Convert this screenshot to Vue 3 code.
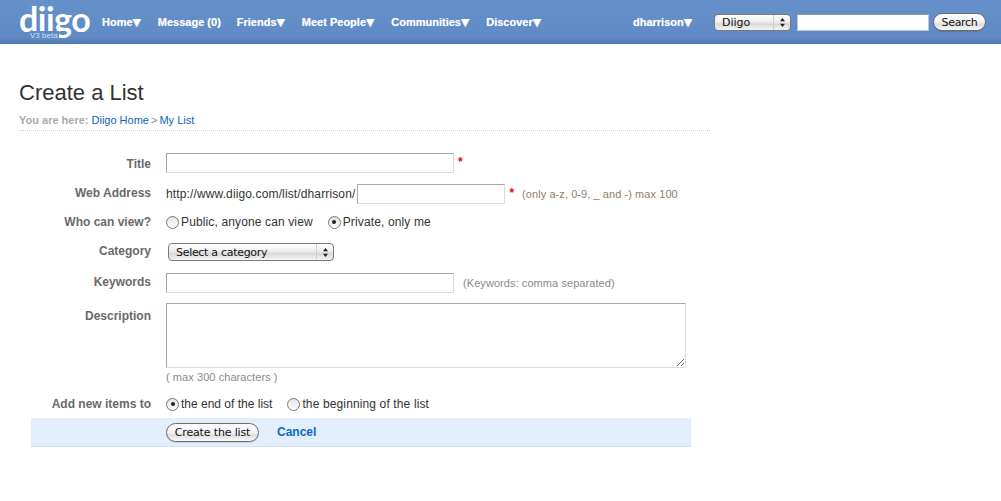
<script setup>
const nav = [
  { label: 'Home', arrow: true },
  { label: 'Message (0)', arrow: false },
  { label: 'Friends', arrow: true },
  { label: 'Meet People', arrow: true },
  { label: 'Communities', arrow: true },
  { label: 'Discover', arrow: true }
]
</script>

<template>
  <div class="page">
    <header class="top">
      <div class="logo">
        <span class="logo-word">diigo</span>
        <span class="logo-sub">V3 beta</span>
      </div>
      <nav class="nav">
        <a v-for="n in nav" :key="n.label" class="nav-item">{{ n.label }}<span v-if="n.arrow" class="arrow">▼</span></a>
      </nav>
      <div class="right">
        <a class="nav-item user">dharrison<span class="arrow">▼</span></a>
        <div class="select select-top">
          <span class="select-label">Diigo</span>
          <span class="stepper">
            <svg width="7" height="11" viewBox="0 0 7 11"><path d="M3.5 1 6 4.2H1zM3.5 10 1 6.8h5z" fill="#222"/></svg>
          </span>
        </div>
        <input class="search-input" type="text" />
        <button class="btn btn-search" type="button">Search</button>
      </div>
    </header>

    <main class="content">
      <h1 class="title">Create a List</h1>
      <div class="crumbs">
        <span class="here">You are here:</span>
        <a class="link">Diigo Home</a>
        <span class="here sep">&gt;</span>
        <a class="link">My List</a>
      </div>

      <form class="form">
        <div class="row row-title">
          <label class="label label-title">Title</label>
          <input class="field wide" type="text" />
          <span class="req">*</span>
        </div>
        <div class="row row-web">
          <label class="label">Web Address</label>
          <span class="text url">http://www.diigo.com/list/dharrison/</span>
          <input class="field short" type="text" />
          <span class="req req-web">*</span>
          <span class="hint hint-web">(only a-z, 0-9, _ and -) max 100</span>
        </div>
        <div class="row row-who">
          <label class="label">Who can view?</label>
          <span class="radio"></span>
          <span class="text opt">Public, anyone can view</span>
          <span class="radio on"></span>
          <span class="text">Private, only me</span>
        </div>
        <div class="row row-cat">
          <label class="label">Category</label>
          <div class="select select-cat">
            <span class="select-label">Select a category</span>
            <span class="stepper">
              <svg width="7" height="11" viewBox="0 0 7 11"><path d="M3.5 1 6 4.2H1zM3.5 10 1 6.8h5z" fill="#222"/></svg>
            </span>
          </div>
        </div>
        <div class="row row-key">
          <label class="label">Keywords</label>
          <input class="field wide" type="text" />
          <span class="hint hint-key">(Keywords: comma separated)</span>
        </div>
        <div class="row row-desc">
          <label class="label">Description</label>
          <textarea class="area"></textarea>
        </div>
        <div class="row row-max">
          <span class="label"></span>
          <span class="hint max">( max 300 characters )</span>
        </div>
        <div class="row row-add">
          <label class="label">Add new items to</label>
          <span class="radio on"></span>
          <span class="text opt opt-end">the end of the list</span>
          <span class="radio"></span>
          <span class="text">the beginning of the list</span>
        </div>
        <div class="actions">
          <button class="btn btn-create" type="button">Create the list</button>
          <a class="cancel">Cancel</a>
        </div>
      </form>
    </main>
  </div>
</template>

<style scoped>
.page {
  width: 1001px;
  height: 501px;
  overflow: hidden;
  background: #fff;
  font-family: "Liberation Sans", Arial, sans-serif;
  color: #333;
}

.top {
  height: 44px;
  box-sizing: border-box;
  display: flex;
  align-items: center;
  padding-left: 20px;
  background: linear-gradient(to bottom, #6590c9 0, #5f8ac5 38px, #5680b9 41px, #4f78b0 44px);
}
.logo {
  width: 82px;
  height: 44px;
  position: relative;
  color: #fff;
  flex: none;
}
.logo-word {
  position: absolute;
  left: -1px;
  top: 0;
  font-family: Lato, sans-serif;
  font-weight: 700;
  font-size: 34px;
  line-height: 38px;
  letter-spacing: -0.5px;
}
.logo-sub {
  position: absolute;
  left: 10px;
  top: 31px;
  padding-right: 1px;
  font-size: 8px;
  line-height: 9px;
  color: #d5e1f1;
  background: #5f8ac5;
}
.nav {
  display: flex;
  gap: 16px;
}
.nav-item {
  font-size: 11px;
  font-weight: bold;
  color: #fff;
  white-space: nowrap;
  text-shadow: 0 0 1px rgba(255, 255, 255, 0.5);
}
.arrow {
  font-family: "DejaVu Sans", sans-serif;
  font-size: 11px;
  margin-right: 0.8px;
}
.right {
  margin-left: auto;
  margin-right: 15px;
  display: flex;
  align-items: center;
}
.user {
  margin-right: 21px;
}
.select {
  display: flex;
  align-items: stretch;
  box-sizing: border-box;
  border: 1px solid #7a7a7a;
  border-radius: 4px;
  background: linear-gradient(to bottom, #fff 0, #eee 45%, #d8d8d8 60%, #f4f4f4 100%);
  font-family: "DejaVu Sans", sans-serif;
  font-size: 11px;
  color: #111;
}
.select-label {
  flex: 1;
  padding-left: 7px;
  line-height: 16px;
  white-space: nowrap;
}
.stepper {
  width: 16px;
  border-left: 1px solid #cfcfcf;
  display: flex;
  align-items: center;
  justify-content: center;
}
.select-top {
  width: 77px;
  height: 17px;
}
.search-input {
  width: 132px;
  height: 17px;
  box-sizing: border-box;
  margin: 0 4px 0 6px;
  padding: 0;
  background: #fff;
  border: 1px solid #bcc8d8;
  border-top-color: #8a97a8;
  outline: none;
}
.btn {
  box-sizing: border-box;
  padding: 0;
  border: 1px solid #6d6d6d;
  border-radius: 10px;
  background: linear-gradient(to bottom, #fff 0, #f3f3f3 50%, #dedede 65%, #fafafa 100%);
  font-family: "DejaVu Sans", sans-serif;
  font-size: 11px;
  color: #111;
  box-shadow: 0 1px 0 rgba(0, 0, 0, 0.12);
}
.btn-search {
  width: 53px;
  height: 18px;
  letter-spacing: -0.3px;
}

.content {
  padding: 35px 0 0 19px;
}
.title {
  margin: 0;
  font-size: 22px;
  font-weight: normal;
  line-height: 28px;
  color: #333;
}
.crumbs {
  width: 691px;
  margin-top: 7px;
  padding-bottom: 3px;
  border-bottom: 1px dotted #ccc;
  font-size: 11px;
  line-height: 13px;
}
.here {
  font-weight: bold;
  color: #aaa;
  margin-right: 3px;
}
.sep {
  font-weight: normal;
  color: #888;
  margin-right: 2px;
}
.link {
  color: #0a62bd;
  margin-right: 2px;
}

.form {
  margin-top: 22px;
  margin-left: 12px;
  width: 660px;
}
.row {
  display: flex;
  align-items: center;
}
.label {
  flex: none;
  width: 120px;
  margin-right: 15px;
  text-align: right;
  font-size: 12px;
  font-weight: bold;
  color: #6a6a6a;
  white-space: nowrap;
}
.label-title {
  padding-top: 1px;
}
.row-web .label,
.row-cat .label,
.row-key .label {
  padding-bottom: 2px;
}
.field {
  box-sizing: border-box;
  height: 20px;
  padding: 0;
  background: #fff;
  border: 1px solid #ddd;
  border-top-color: #a8a8a8;
  border-left-color: #a8a8a8;
  outline: none;
}
.wide {
  width: 288px;
}
.short {
  width: 148px;
  margin-left: 2px;
}
.text {
  font-size: 12px;
  letter-spacing: 0.13px;
  color: #333;
  white-space: nowrap;
}
.hint {
  font-size: 11px;
  letter-spacing: 0.07px;
  color: #8a8a8a;
  white-space: nowrap;
}
.req {
  color: #e00;
  font-size: 12px;
  font-weight: bold;
  margin-left: 4px;
  align-self: flex-start;
  line-height: 14px;
  margin-top: 2px;
}
.req-web {
  margin-left: 4px;
}
.hint-web {
  margin-left: 8px;
  color: #8f8068;
}
.hint-key {
  margin-left: 9px;
}
.radio {
  flex: none;
  box-sizing: border-box;
  width: 13px;
  height: 13px;
  margin-right: 2px;
  border: 1px solid #777;
  border-radius: 50%;
  background: linear-gradient(to bottom, #e2e2e2, #fff);
  display: flex;
  align-items: center;
  justify-content: center;
}
.radio.on::after {
  content: "";
  width: 4px;
  height: 4px;
  border-radius: 50%;
  background: #222;
}
.opt {
  margin-right: 15px;
}
.opt-end {
  letter-spacing: 0;
}
.row-title {
  height: 20px;
}
.row-web {
  height: 20px;
  margin-top: 11px;
}
.row-who {
  height: 16px;
  margin-top: 10px;
}
.row-cat {
  height: 18px;
  margin-top: 13px;
}
.select-cat {
  width: 166px;
  height: 18px;
  margin-left: 2px;
}
.select-cat .select-label {
  letter-spacing: -0.3px;
  line-height: 17px;
}
.row-key {
  height: 20px;
  margin-top: 12px;
}
.row-desc {
  margin-top: 10px;
  align-items: flex-start;
}
.row-desc .label {
  line-height: 26px;
}
.area {
  box-sizing: border-box;
  width: 520px;
  height: 65px;
  display: block;
  padding: 0;
  background: #fff;
  border: 1px solid #ddd;
  border-top-color: #a8a8a8;
  border-left-color: #a8a8a8;
  outline: none;
}
.row-max {
  height: 14px;
  margin-top: 2px;
}
.row-add {
  height: 16px;
  margin-top: 12px;
}
.actions {
  height: 29px;
  box-sizing: border-box;
  margin-top: 6px;
  padding-left: 135px;
  display: flex;
  align-items: center;
  background: #e2eefc;
  border-bottom: 1px solid #d3e2f5;
}
.btn-create {
  width: 93px;
  height: 19px;
  letter-spacing: -0.15px;
}
.cancel {
  margin-left: 18px;
  font-size: 12px;
  font-weight: bold;
  color: #0b6bc4;
}
</style>
